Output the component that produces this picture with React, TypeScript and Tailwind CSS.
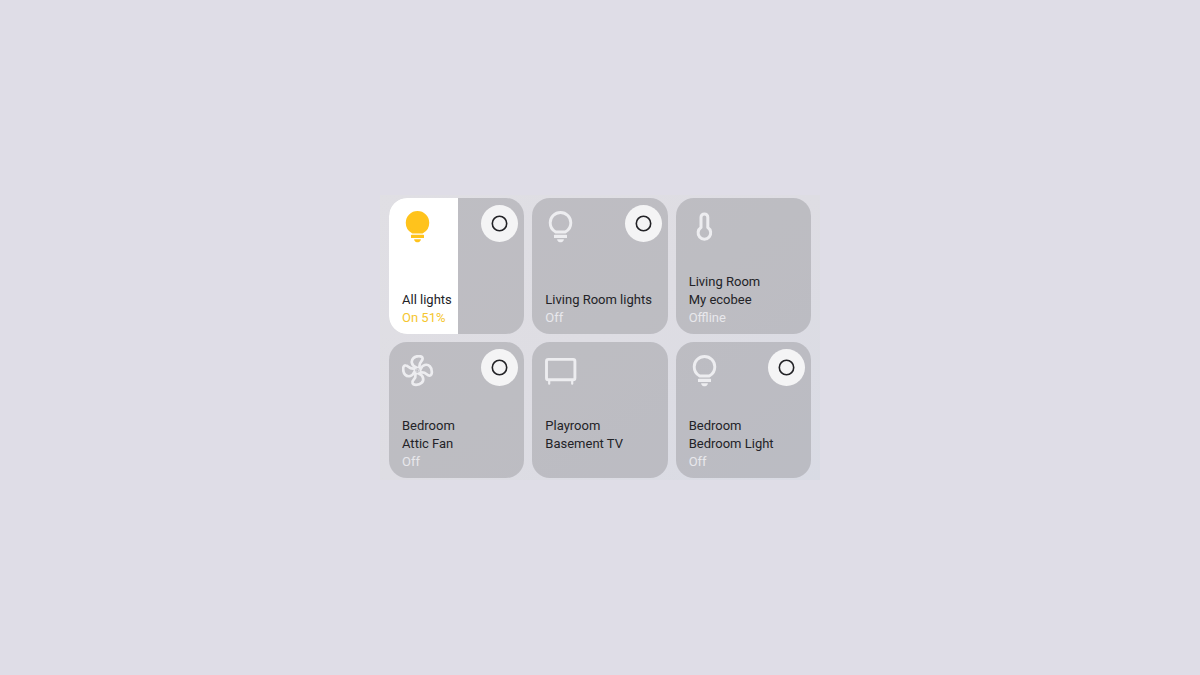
import type { ReactNode } from "react";

function Bulb({ on = false }: { on?: boolean }) {
  return (
    <svg viewBox="0 0 32 32" className="size-8" aria-hidden="true" fill="currentColor">
      <path
        d="M10.700 21C7.300 19.200 5.200 15.700 5.200 11.800a10.300 10.300 0 1 1 20.600 0c0 3.900-2.100 7.400-5.500 9.200z"
        fill={on ? "currentColor" : "none"}
        stroke="currentColor"
        strokeWidth="2.900"
        strokeLinejoin="round"
      />
      <rect x="9" y="23.800" width="13" height="3.200" rx="0.600" />
      <path d="M12.100 28.300h6.800c-.2 1.700-1.300 2.900-2.700 2.900h-1.400c-1.400 0-2.500-1.200-2.700-2.900z" />
    </svg>
  );
}

function Thermometer() {
  return (
    <svg viewBox="0 0 32 32" className="size-8" aria-hidden="true" fill="none" stroke="currentColor" strokeWidth="3">
      <path d="M12 6.300a3.400 3.400 0 0 1 6.800 0V16.600a6.300 6.300 0 1 1-6.800 0z" strokeLinejoin="round" />
    </svg>
  );
}

const blade = "M-1.600-3.200C-5.800-4.800-7-9.500-4.200-12.300C-1.700-14.900 5.300-15.300 5.100-11.900C5-8.900 1.300-9 2-3.300";

function Fan() {
  return (
    <svg viewBox="0 0 32 32" className="size-8" aria-hidden="true" fill="none" stroke="currentColor" strokeWidth="2.700">
      <g transform="translate(15.500 15.500)" strokeLinecap="round" strokeLinejoin="round">
        {[0, 90, 180, 270].map((angle) => (
          <path key={angle} d={blade} transform={`rotate(${angle})`} />
        ))}
        <circle r="3.200" strokeWidth="1.600" />
        <circle r="1.400" strokeWidth="0.800" opacity="0.600" />
      </g>
    </svg>
  );
}

function Television() {
  return (
    <svg viewBox="0 0 32 32" className="size-8" aria-hidden="true" fill="none" stroke="currentColor">
      <rect x="1.500" y="4.400" width="28.400" height="20.400" rx="1.800" strokeWidth="2.900" />
      <path d="M4.200 25.500V28.700M27.200 25.500V28.700" strokeWidth="2.200" strokeLinecap="round" />
    </svg>
  );
}

type Device = {
  title: string[];
  status?: string;
  icon: ReactNode;
  level?: number;
  toggle?: boolean;
};

const devices: Device[] = [
  { title: ["All lights"], status: "On 51%", icon: <Bulb on />, level: 51, toggle: true },
  { title: ["Living Room lights"], status: "Off", icon: <Bulb />, toggle: true },
  { title: ["Living Room", "My ecobee"], status: "Offline", icon: <Thermometer /> },
  { title: ["Bedroom", "Attic Fan"], status: "Off", icon: <Fan />, toggle: true },
  { title: ["Playroom", "Basement TV"], icon: <Television /> },
  { title: ["Bedroom", "Bedroom Light"], status: "Off", icon: <Bulb />, toggle: true },
];

function DeviceCard({ title, status, icon, level, toggle }: Device) {
  const on = level !== undefined;
  return (
    <article className="relative isolate flex min-h-[136px] flex-col justify-between overflow-hidden rounded-[18px] bg-[#a3a2a8]/55 pb-[7px] pl-[13px]">
      {on && <div className="absolute inset-y-0 left-0 -z-10 bg-white" style={{ width: `${level}%` }} />}
      <div className="flex items-start justify-between pr-[6px]">
        <div className={on ? "pt-[13px] text-[#ffc31c]" : "pt-[13px] text-[#ededf0]"}>{icon}</div>
        {toggle && (
          <button
            type="button"
            aria-label={`Toggle ${title.join(" ")}`}
            aria-pressed={on}
            className="mt-[7px] flex size-[37px] items-center justify-center rounded-full bg-[#f4f4f5]"
          >
            <svg viewBox="0 0 17 17" className="size-[17px]" fill="none" stroke="#222226" strokeWidth="1.600" aria-hidden="true">
              <circle cx="8.500" cy="8.500" r="7.200" />
            </svg>
          </button>
        )}
      </div>
      <div className="text-[13px] leading-[18px]">
        <h2 className="text-[#232327]">
          {title.map((line) => (
            <span key={line} className="block">{line}</span>
          ))}
        </h2>
        <p className={on ? "min-h-[18px] text-[#f5c62f]" : "min-h-[18px] text-[#e8e8ec]"}>{status}</p>
      </div>
    </article>
  );
}

export default function App() {
  return (
    <main className="flex min-h-screen items-center justify-center bg-[#dfdde7] font-['Roboto',sans-serif]">
      <section
        aria-label="Devices"
        className="grid w-full max-w-[440px] grid-cols-3 gap-2 bg-linear-to-br from-[#e0dfe4] via-[#dedde3] to-[#d9dbe4] px-[9px] pt-[3px] pb-[2px]"
      >
        {devices.map((device) => (
          <DeviceCard key={device.title.join(" ")} {...device} />
        ))}
      </section>
    </main>
  );
}
